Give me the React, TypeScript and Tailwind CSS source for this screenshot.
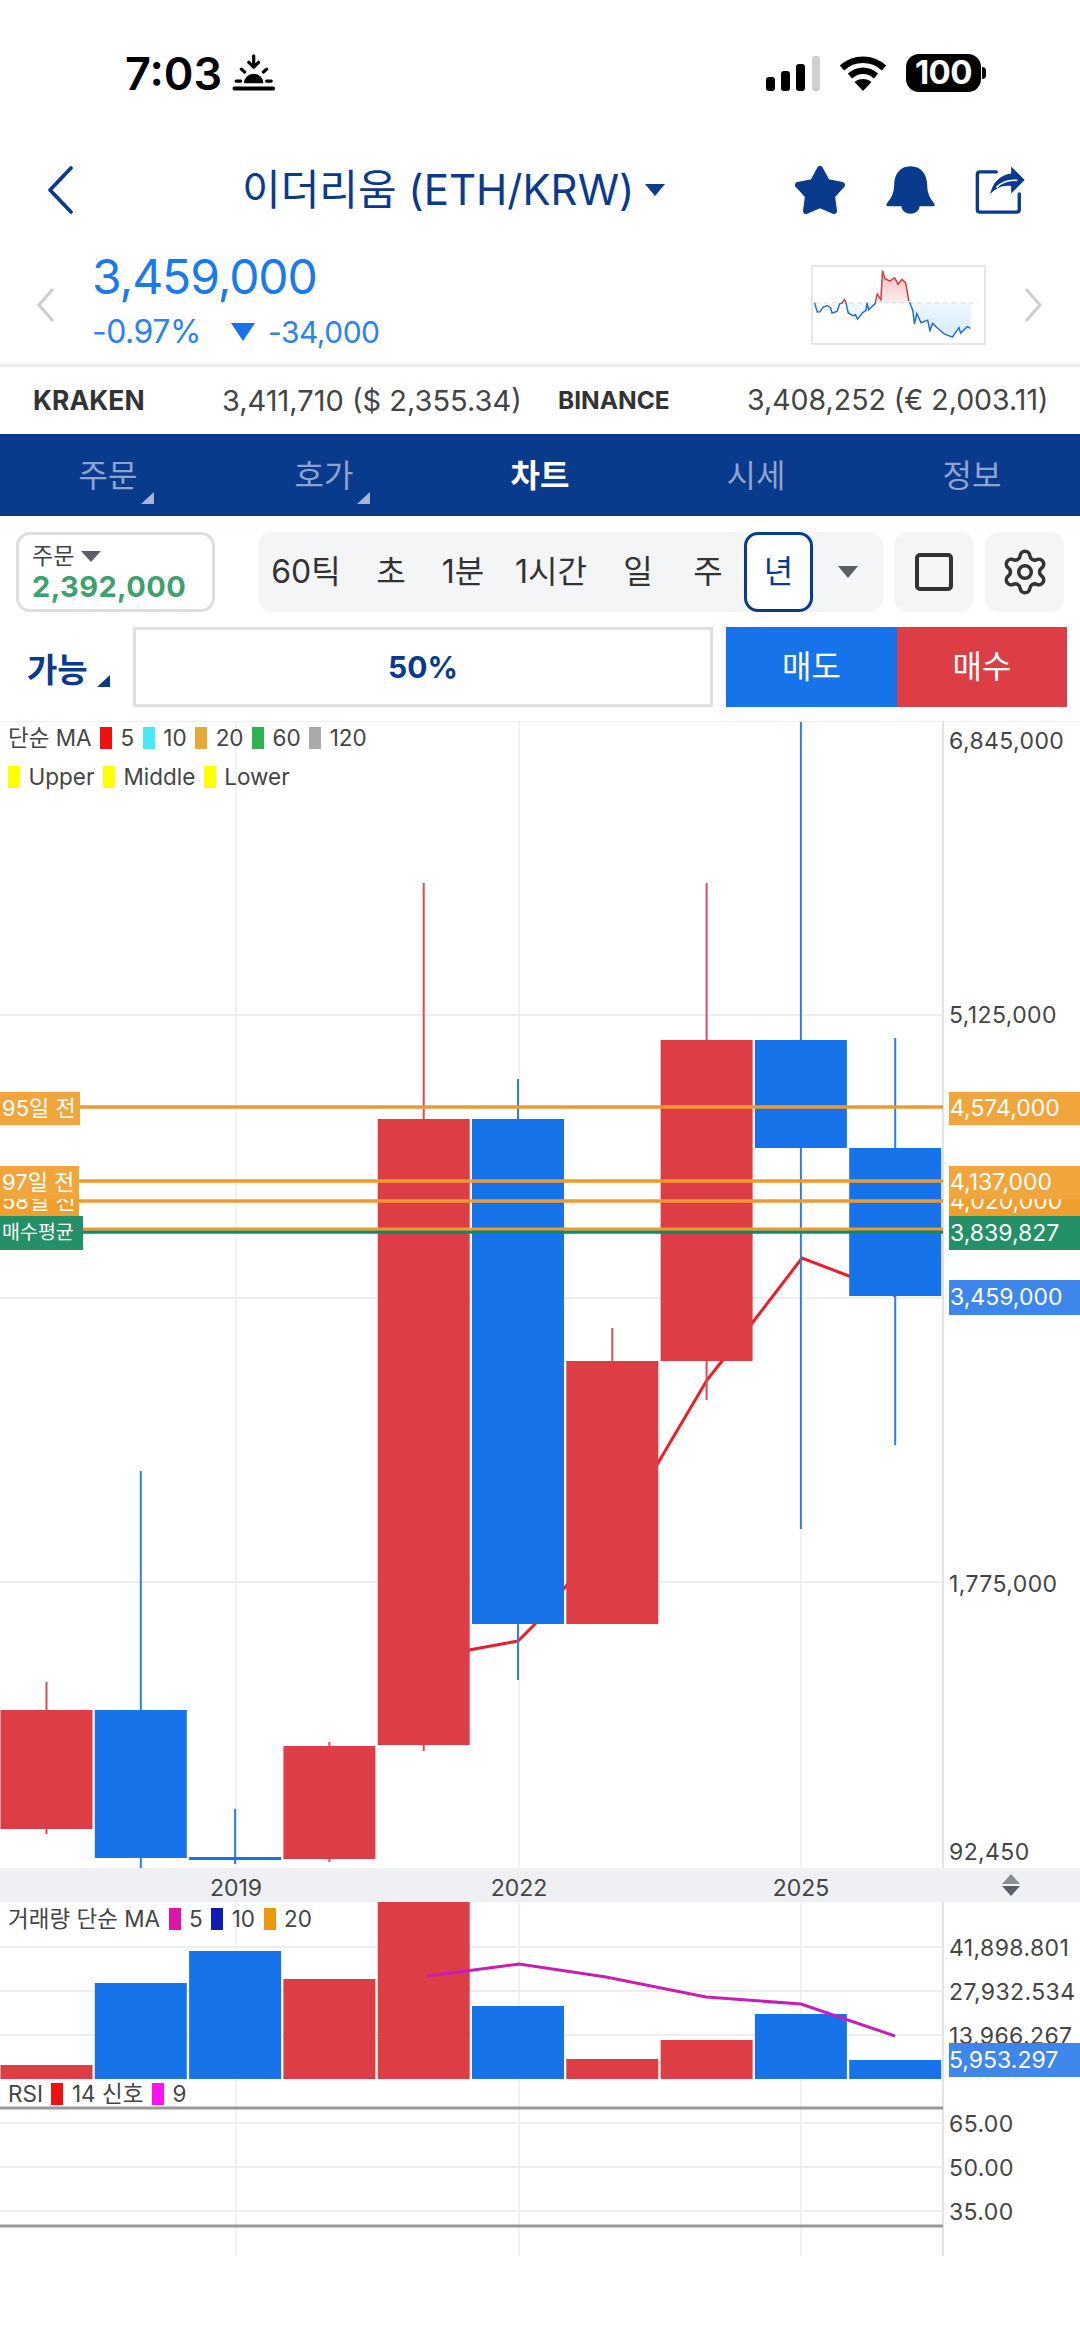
import React from 'react';
import { Settings } from 'lucide-react';

const NAVY = '#0a3a8c';

// candle data in page pixels: open/close box, wick
const CANDLES = [
    { c: 'r', top: 1710, bottom: 1829, hi: 1682, lo: 1834 },
    { c: 'b', top: 1710, bottom: 1858, hi: 1471, lo: 1868 },
    { c: 'b', top: 1857, bottom: 1860, hi: 1809, lo: 1864 },
    { c: 'r', top: 1746, bottom: 1859, hi: 1742, lo: 1862 },
    { c: 'r', top: 1119, bottom: 1745, hi: 883, lo: 1751 },
    { c: 'b', top: 1119, bottom: 1624, hi: 1079, lo: 1680 },
    { c: 'r', top: 1361, bottom: 1624, hi: 1328, lo: 1624 },
    { c: 'r', top: 1040, bottom: 1361, hi: 883, lo: 1400 },
    { c: 'b', top: 1040, bottom: 1148, hi: 722, lo: 1529 },
    { c: 'b', top: 1148, bottom: 1296, hi: 1038, lo: 1445 },
];
const VOLUMES = [2065, 1983, 1951, 1979, 1902, 2006, 2059, 2040, 2014, 2060];
const RED = '#dd3d45';
const BLUE = '#1673ea';
const cx = (i: number) => 46.5 + i * 94.3;

const GridX = ({ y1, y2 }: { y1: number; y2: number }) => (
    <>
        {[236, 519, 801].map((x) => (
            <line key={x} x1={x} x2={x} y1={y1} y2={y2} stroke="#eceef1" strokeWidth="1.5" />
        ))}
        <line x1="943" x2="943" y1={y1} y2={y2} stroke="#e2e3e6" strokeWidth="2" />
    </>
);

const GridY = ({ ys }: { ys: number[] }) => (
    <>
        {ys.map((y) => (
            <line key={y} x1="0" x2="943" y1={y} y2={y} stroke="#eceef1" strokeWidth="2" />
        ))}
    </>
);

const Swatch = ({ color }: { color: string }) => <span className="w-[12px] h-[22px] shrink-0" style={{ background: color }} />;

const Legend = ({ items, className }: { items: (string | { color: string })[]; className: string }) => (
    <div className={`absolute left-[8px] flex items-center gap-[8.5px] text-[22.5px] leading-none text-[#444] ${className}`}>
        {items.map((it, i) =>
            typeof it === 'string' ? <span key={i} className="whitespace-nowrap">{it}</span> : <Swatch key={i} color={it.color} />
        )}
    </div>
);

const AxisLabel = ({ y, text }: { y: number; text: string }) => (
    <div className="absolute left-[949px] text-[23px] leading-none tracking-[0.4px] text-[#444] -translate-y-1/2" style={{ top: y }}>
        {text}
    </div>
);

const PriceTag = ({ top, height, bg, text }: { top: number; height: number; bg: string; text: string }) => (
    <div className="absolute left-[949px] w-[131px] flex items-center pl-[1px] text-[23px] text-white overflow-hidden" style={{ top, height, background: bg }}>
        {text}
    </div>
);

const LeftTag = ({ top, height, width, bg, text, size }: { top: number; height: number; width: number; bg: string; text: string; size: string }) => (
    <div className={`absolute left-0 flex items-center pl-[2px] text-white whitespace-nowrap overflow-hidden ${size}`} style={{ top, height, width, background: bg }}>
        {text}
    </div>
);

const SunIcon = () => (
    <svg width="46" height="40" viewBox="362 42 142 122" fill="none">
        <rect x="367" y="145" width="131" height="12" rx="5" fill="#000" />
        <path d="M402 135 a30 30 0 0 1 60 0 Z" fill="#000" />
        <g stroke="#000" strokeWidth="10" strokeLinecap="round">
            <path d="M378 128h14M472 128h14M394 91l10 9M472 91l-10 9" />
            <path d="M432 50v34M417 70l15 15 15-15" fill="none" strokeLinejoin="round" />
        </g>
    </svg>
);

const SignalIcon = () => (
    <svg width="54" height="35" viewBox="0 0 54 35">
        <rect x="0" y="21" width="9" height="14" rx="3" fill="#000" />
        <rect x="15" y="15" width="9" height="20" rx="3" fill="#000" />
        <rect x="30" y="8" width="9" height="27" rx="3" fill="#000" />
        <rect x="46" y="0" width="8" height="35" rx="3" fill="#cfcfcf" />
    </svg>
);

const WifiIcon = () => (
    <svg width="48" height="36" viewBox="0 0 48 36" fill="none" stroke="#000" strokeWidth="6.5">
        <path d="M3 13 C15 2 33 2 45 13" />
        <path d="M11 21 C19 14 29 14 37 21" />
        <path d="M24 36 L15.5 27 C20 23 28 23 32.5 27 Z" fill="#000" stroke="none" />
    </svg>
);

const ShareIcon = () => (
    <svg width="50" height="48" viewBox="585 44 148 141" fill="none">
        <path d="M648 61 H600 Q592 61 592 69 V172 Q592 180 600 180 H708 Q716 180 716 172 V126" stroke={NAVY} strokeWidth="10" strokeLinecap="round" />
        <path d="M692 45 L732 85 L692 125 V103 C668 99 648 108 630 127 C637 92 660 70 692 66 Z" fill={NAVY} />
        <path d="M650 106 C664 92 684 84 708 86" stroke="#fff" strokeWidth="5" strokeLinecap="round" />
    </svg>
);

const MiniChart = () => (
    <div className="w-[175px] h-[80px] mt-[29px] border-2 border-[#e6e6e6] overflow-hidden">
        <svg width="171" height="76" viewBox="97 47 519 233" preserveAspectRatio="none" fill="none">
            <defs>
                <linearGradient id="upFill" x1="0" x2="0" y1="0" y2="1">
                    <stop offset="0" stopColor="#f6b9b9" />
                    <stop offset="1" stopColor="#fdf0f0" />
                </linearGradient>
                <linearGradient id="downFill" x1="0" x2="0" y1="0" y2="1">
                    <stop offset="0" stopColor="#eef7fe" />
                    <stop offset="1" stopColor="#d6ecfd" />
                </linearGradient>
            </defs>
            <path d="M292 157 L292 130 303 147 308 58 315 82 330 90 345 80 355 100 367 85 378 95 388 157 Z" fill="url(#upFill)" />
            <path d="M392 157 L400 180 405 222 412 190 425 218 445 210 452 242 460 220 475 235 495 252 520 262 540 233 545 250 565 230 575 235 L575 157 Z" fill="url(#downFill)" />
            <path d="M195 157 L203 185 230 205 260 175 285 157 Z" fill="#eef7fe" />
            <line x1="102" x2="600" y1="157" y2="157" stroke="#d8d8d8" strokeWidth="3" strokeDasharray="14 12" />
            <polyline points="102,157 110,185 118,184 128,170 140,165 150,172 155,188 170,183 178,160 188,157" stroke="#1f6fd0" strokeWidth="4.5" />
            <polyline points="186,157 192,147 198,157" stroke="#d23c3c" strokeWidth="4.5" />
            <polyline points="197,157 204,188 220,197 226,193 232,207 248,187 258,180 261,157 266,178 285,160 288,157" stroke="#1f6fd0" strokeWidth="4.5" />
            <polyline points="286,157 292,130 303,147 308,58 315,82 330,90 345,80 355,100 367,85 378,95 388,152" stroke="#d23c3c" strokeWidth="4.5" />
            <polyline points="390,155 400,180 405,222 412,190 425,218 445,210 452,242 460,220 475,235 495,252 520,262 540,233 545,250 565,230 575,235" stroke="#1f6fd0" strokeWidth="4.5" />
        </svg>
    </div>
);

const Corner = ({ className }: { className: string }) => (
    <svg width="13" height="12" viewBox="0 0 13 12" className={className}>
        <path d="M13 0 V12 H0 Z" fill="currentColor" />
    </svg>
);

const TABS = [
    { label: '주문', corner: true },
    { label: '호가', corner: true },
    { label: '차트', active: true },
    { label: '시세' },
    { label: '정보' },
];

const INTERVALS = [
    { label: '60틱', w: 'w-[96px]' },
    { label: '초', w: 'w-[74px]' },
    { label: '1분', w: 'w-[70px]' },
    { label: '1시간', w: 'w-[106px]' },
    { label: '일', w: 'w-[68px]' },
    { label: '주', w: 'w-[72px]' },
];

const App: React.FC = () => {
    return (
        <div className="w-[1080px] h-[2341px] bg-white overflow-hidden font-['Inter','Noto_Sans_CJK_KR',sans-serif]">
            {/* Status bar */}
            <div className="h-[146px] flex items-start justify-between pt-[50px] pl-[125px] pr-[94px]">
                <div className="flex items-center gap-[9px] h-[46px]">
                    <span className="text-[45px] leading-none font-semibold text-black">7:03</span>
                    <SunIcon />
                </div>
                <div className="flex items-center h-[46px] gap-[19px]">
                    <SignalIcon />
                    <WifiIcon />
                    <div className="flex items-center gap-[1px]">
                        <div className="w-[75px] h-[38px] rounded-[13px] bg-black flex items-center justify-center text-[33px] font-bold tracking-[-0.5px] text-white">100</div>
                        <div className="w-[4px] h-[12px] rounded-r bg-black" />
                    </div>
                </div>
            </div>

            {/* Title row */}
            <div className="h-[90px] flex items-center pl-[45px] pr-[55px] pb-[2px]" style={{ color: NAVY }}>
                <svg width="30" height="50" viewBox="0 0 30 50" fill="none">
                    <path d="M26 3 L5 25 L26 47" stroke={NAVY} strokeWidth="3.8" strokeLinecap="round" strokeLinejoin="round" />
                </svg>
                <div className="ml-[167px] flex items-center gap-[11px]">
                    <span className="text-[42px] leading-none whitespace-nowrap">이더리움 (ETH/KRW)</span>
                    <svg width="20" height="12" viewBox="0 0 20 12"><path d="M0 0 H20 L10 12 Z" fill={NAVY} /></svg>
                </div>
                <div className="ml-auto flex items-center gap-[39px]">
                    <svg width="52" height="50" viewBox="0 0 52 50"><path d="M26 4 L33 17 L48 20 L38 31 L40 46 L26 40 L12 46 L14 31 L4 20 L19 17 Z" fill={NAVY} stroke={NAVY} strokeWidth="6" strokeLinejoin="round" /></svg>
                    <svg width="51" height="50" viewBox="306 42 162 157"><path d="M387 45 C350 45 335 75 335 105 C335 135 322 150 312 163 Q306 172 318 172 H456 Q468 172 462 163 C452 150 440 135 440 105 C440 75 424 45 387 45 Z M358 172 a29 24 0 0 0 58 0 Z" fill={NAVY} /></svg>
                    <ShareIcon />
                </div>
            </div>

            {/* Price block */}
            <div className="h-[128px] flex pl-[36px] pr-[37px]">
                <svg width="20" height="36" viewBox="0 0 20 36" fill="none" className="mt-[51px] shrink-0"><path d="M17 2 L3 18 L17 34" stroke="#cdcdcd" strokeWidth="3" /></svg>
                <div className="ml-[36px] pt-[18px]">
                    <div className="text-[48px] leading-[46px] tracking-[-1.1px] text-[#1a7aeb]">3,459,000</div>
                    <div className="mt-[12px] flex items-center leading-[40px] tracking-[-0.5px] text-[#2a83ee]">
                        <span className="w-[139px] text-[32px]">-0.97%</span>
                        <svg width="24" height="18" viewBox="0 0 24 18" className="mr-[13px]"><path d="M0 0 H24 L12 18 Z" fill="#1673ea" /></svg>
                        <span className="text-[30px]">-34,000</span>
                    </div>
                </div>
                <div className="ml-auto flex gap-[37px]">
                    <MiniChart />
                    <svg width="20" height="36" viewBox="0 0 20 36" fill="none" className="mt-[51px]"><path d="M3 2 L17 18 L3 34" stroke="#cdcdcd" strokeWidth="3" /></svg>
                </div>
            </div>

            {/* Exchange row */}
            <div className="h-[70px] border-t-[3px] border-[#efefef] flex items-center pl-[33px] text-[#444] whitespace-nowrap">
                <span className="w-[189px] text-[26.5px] font-bold text-[#333]">KRAKEN</span>
                <span className="w-[336px] text-[29px]">3,411,710 ($ 2,355.34)</span>
                <span className="w-[189px] text-[24.5px] font-bold text-[#333]">BINANCE</span>
                <span className="text-[28.5px]">3,408,252 (€ 2,003.11)</span>
            </div>

            {/* Tabs */}
            <div className="h-[82px] bg-[#0a3a8c] flex">
                {TABS.map((t) => (
                    <div key={t.label} className={`flex-1 relative flex items-center justify-center pt-[2px] text-[32px] ${t.active ? 'font-bold text-white' : 'text-[#8da3cf]'}`}>
                        {t.label}
                        {t.corner && <Corner className="absolute left-[141px] top-[58px] text-[#a3b5da]" />}
                    </div>
                ))}
            </div>

            {/* Toolbar */}
            <div className="h-[80px] mt-[16px] flex pl-[16px]">
                <div className="w-[199px] h-[80px] border-[3px] border-[#dedede] rounded-[14px] pl-[13px] pt-[6px]">
                    <div className="flex items-center gap-[7px] text-[23px] leading-[30px] text-[#444]">
                        주문
                        <svg width="20" height="11" viewBox="0 0 20 11"><path d="M0 0 H20 L10 11 Z" fill="#5c5f68" /></svg>
                    </div>
                    <div className="text-[29px] leading-[32px] font-bold tracking-[0.4px] text-[#3f9f6f]">2,392,000</div>
                </div>
                <div className="ml-[43px] w-[625px] h-[80px] bg-[#f3f5f7] rounded-[14px] flex items-center text-[32px] text-[#333]">
                    {INTERVALS.map((iv) => (
                        <div key={iv.label} className={`${iv.w} text-center whitespace-nowrap`}>{iv.label}</div>
                    ))}
                    <div className="w-[69px] h-[80px] bg-white border-[3px] border-[#0a3a8c] rounded-[14px] flex items-center justify-center text-[#0a3a8c]">년</div>
                    <div className="w-[70px] flex justify-center">
                        <svg width="20" height="12" viewBox="0 0 20 12"><path d="M0 0 H20 L10 12 Z" fill="#5c5f68" /></svg>
                    </div>
                </div>
                <div className="ml-[11px] w-[80px] h-[80px] bg-[#f3f5f7] rounded-[14px] flex items-center justify-center">
                    <div className="w-[38px] h-[38px] border-[4px] border-[#333] rounded-[5px]" />
                </div>
                <div className="ml-[11px] w-[79px] h-[80px] bg-[#f3f5f7] rounded-[14px] flex items-center justify-center">
                    <Settings size={50} strokeWidth={1.7} color="#333" />
                </div>
            </div>

            {/* Order ratio row */}
            <div className="h-[80px] mt-[15px] flex">
                <div className="w-[133px] relative flex items-center pl-[27px] pt-[8px] text-[33px] font-bold" style={{ color: NAVY }}>
                    가능
                    <Corner className="absolute left-[97px] top-[48px]" />
                </div>
                <div className="w-[580px] border-[3px] border-[#dfdfdf] flex items-center justify-center text-[30px] font-bold" style={{ color: NAVY }}>50%</div>
                <div className="ml-[13px] w-[171px] bg-[#1673ea] flex items-center justify-center text-[32px] text-white">매도</div>
                <div className="w-[170px] bg-[#dd3d45] flex items-center justify-center text-[32px] text-white">매수</div>
            </div>

            {/* Price chart */}
            <div className="mt-[14px] h-[1147px] border-t-[1px] border-[#eee] relative">
                <svg width="1080" height="1146" viewBox="0 722 1080 1146" className="absolute inset-0">
                    <GridY ys={[1015, 1298, 1582]} />
                    <GridX y1={722} y2={1868} />
                    <polyline points="469,1650 518,1641 535,1624 612,1530 658,1463 707,1380 722,1361 753,1322 802,1258 849,1276 896,1296" fill="none" stroke="#ee1c25" strokeWidth="3" />
                    {CANDLES.map((d, i) => {
                        const col = d.c === 'r' ? RED : BLUE;
                        return (
                            <g key={i}>
                                <line x1={cx(i)} x2={cx(i)} y1={d.hi} y2={d.lo} stroke={d.c === 'r' ? '#dd4a50' : '#2f7fe0'} strokeWidth="2" />
                                <rect x={cx(i) - 46} y={d.top} width="92" height={d.bottom - d.top} fill={col} />
                            </g>
                        );
                    })}
                    {/* order and average price lines */}
                    <g stroke="#ee9a2e" strokeWidth="3.5">
                        <line x1="80" x2="943" y1="1107" y2="1107" />
                        <line x1="79" x2="943" y1="1181" y2="1181" />
                        <line x1="79" x2="943" y1="1201" y2="1201" />
                    </g>
                    <line x1="83" x2="943" y1="1232" y2="1232" stroke="#0e8a66" strokeWidth="3.5" />
                    <line x1="83" x2="943" y1="1229" y2="1229" stroke="#ee9a2e" strokeWidth="3" />
                </svg>

                <Legend className="top-[5px]" items={['단순 MA', { color: '#f01010' }, '5', { color: '#4ae8f5' }, '10', { color: '#e8a838' }, '20', { color: '#2fb350' }, '60', { color: '#aaaaaa' }, '120']} />
                <Legend className="top-[44px]" items={[{ color: '#ffff00' }, 'Upper', { color: '#ffff00' }, 'Middle', { color: '#ffff00' }, 'Lower']} />

                <AxisLabel y={19} text="6,845,000" />
                <AxisLabel y={293} text="5,125,000" />
                <AxisLabel y={862} text="1,775,000" />
                <AxisLabel y={1130} text="92,450" />

                {/* tags read top-down in the chart; later ones cover earlier ones */}
                <LeftTag top={370} height={33} width={80} bg="#f0a63c" text="95일 전" size="text-[22px]" />
                <LeftTag top={463} height={33} width={79} bg="#f09f2e" text="58일 전" size="text-[22px]" />
                <LeftTag top={444} height={33} width={79} bg="#f0a63c" text="97일 전" size="text-[22px]" />
                <LeftTag top={494} height={34} width={83} bg="#239068" text="매수평균" size="text-[19.5px]" />

                <PriceTag top={370} height={33} bg="#f0a63c" text="4,574,000" />
                <PriceTag top={463} height={33} bg="#f09f2e" text="4,020,000" />
                <PriceTag top={444} height={33} bg="#f0a63c" text="4,137,000" />
                <PriceTag top={494} height={34} bg="#239068" text="3,839,827" />
                <PriceTag top={558} height={35} bg="#3f86ea" text="3,459,000" />
            </div>

            {/* Time axis */}
            <div className="h-[34px] bg-[#eef0f3] relative text-[23px] text-[#444]">
                <span className="absolute left-[236px] top-[3px] -translate-x-1/2">2019</span>
                <span className="absolute left-[519px] top-[3px] -translate-x-1/2">2022</span>
                <span className="absolute left-[801px] top-[3px] -translate-x-1/2">2025</span>
                <svg width="20" height="22" viewBox="0 0 20 22" className="absolute left-[1001px] top-[6px]">
                    <path d="M10 0 L19 10 H1 Z" fill="#8a8d94" />
                    <path d="M1 12 H19 L10 22 Z" fill="#5c5f68" />
                </svg>
            </div>

            {/* Volume */}
            <div className="h-[177px] relative">
                <svg width="1080" height="177" viewBox="0 1902 1080 177" className="absolute inset-0">
                    <GridY ys={[1947, 1991, 2035]} />
                    <GridX y1={1902} y2={2079} />
                    {VOLUMES.map((top, i) => (
                        <rect key={i} x={cx(i) - 46} y={top} width="92" height={2079 - top} fill={CANDLES[i].c === 'r' ? RED : BLUE} />
                    ))}
                    <polyline points="427,1976 519,1964 606,1977 706,1997 801,2004 895,2036" fill="none" stroke="#c71fb5" strokeWidth="3" />
                </svg>
                <Legend className="top-[6px]" items={['거래량 단순 MA', { color: '#dc16a8' }, '5', { color: '#0c1cb5' }, '10', { color: '#ec9a0a' }, '20']} />
                <AxisLabel y={46} text="41,898.801" />
                <AxisLabel y={90} text="27,932.534" />
                <AxisLabel y={134} text="13,966.267" />
                <div className="absolute left-[949px] top-[141px] w-[131px] h-[34px] bg-[#3f86ea] flex items-center text-[23px] text-white">5,953.297</div>
            </div>

            {/* RSI */}
            <div className="h-[177px] relative">
                <svg width="1080" height="177" viewBox="0 2079 1080 177" className="absolute inset-0">
                    <GridY ys={[2123, 2167, 2211]} />
                    <GridX y1={2079} y2={2256} />
                    <line x1="0" x2="943" y1="2108" y2="2108" stroke="#999" strokeWidth="3" />
                    <line x1="0" x2="943" y1="2226" y2="2226" stroke="#999" strokeWidth="3" />
                </svg>
                <Legend className="top-[4px]" items={['RSI', { color: '#f01010' }, '14 신호', { color: '#ff12f0' }, '9']} />
                <AxisLabel y={45} text="65.00" />
                <AxisLabel y={89} text="50.00" />
                <AxisLabel y={133} text="35.00" />
            </div>
        </div>
    );
};

export default App;
